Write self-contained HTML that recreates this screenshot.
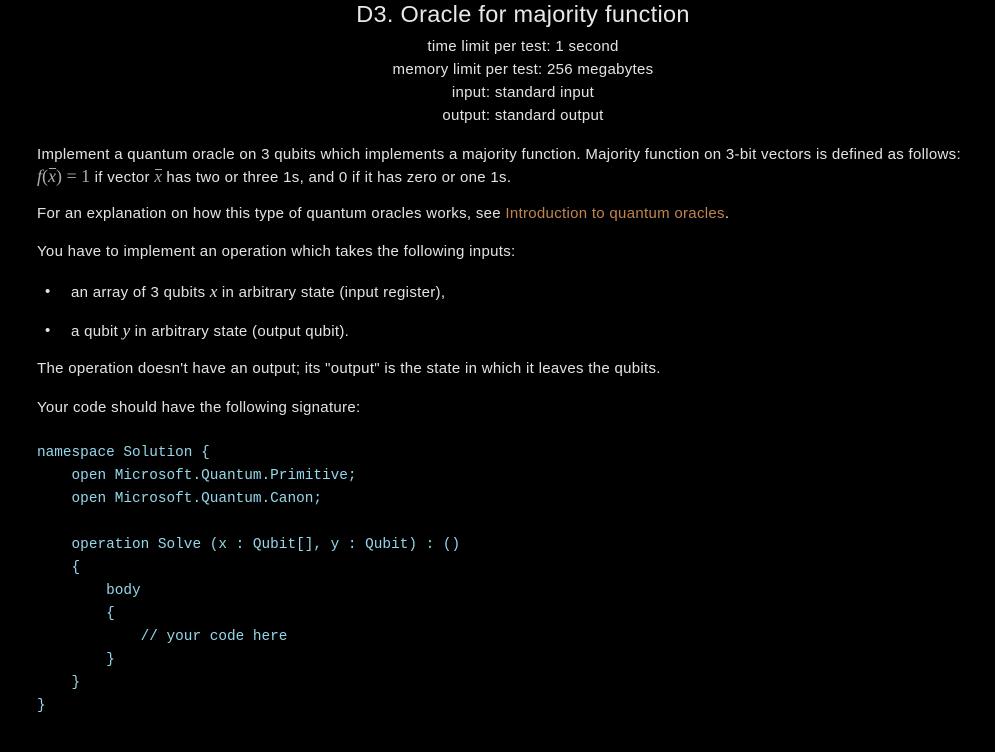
<!DOCTYPE html>
<html><head><meta charset="utf-8">
<style>
body{margin:0;background:#000;width:995px;height:752px;overflow:hidden;position:relative;font-family:"Liberation Sans",Arial,sans-serif;color:#e2e2e2;font-size:15px;letter-spacing:0.3px}
.a{position:absolute;white-space:nowrap;line-height:18px;margin-top:1px}
.c{left:0;width:1046px;text-align:center}
.m{font-family:"Liberation Serif",serif;font-style:italic;font-size:17px;letter-spacing:0}
.v{position:relative;display:inline-block}
.v:after{content:"";position:absolute;left:1px;right:0;top:1px;height:1px;background:#aaa}
.code{position:absolute;left:37px;top:442px;font-family:"Liberation Mono",monospace;font-size:14.4px;letter-spacing:0;line-height:23px;color:#94d6ea;white-space:pre;margin:0}
a{color:#c0844c;text-decoration:none}
</style></head><body>
<div class="a c" style="top:0;font-size:23.5px;line-height:26px;color:#e8e8e8">D3. Oracle for majority function</div>
<div class="a c" style="top:37px">time limit per test: 1 second</div>
<div class="a c" style="top:60px">memory limit per test: 256 megabytes</div>
<div class="a c" style="top:83px">input: standard input</div>
<div class="a c" style="top:106px">output: standard output</div>
<div class="a" style="left:37px;top:145px">Implement a quantum oracle on 3 qubits which implements a majority function. Majority function on 3-bit vectors is defined as follows:</div>
<div class="a" style="left:37px;top:166px"><span style="font-family:'Liberation Serif',serif;font-size:18px;color:#aaa;letter-spacing:0"><i>f</i>(<i class="v">x</i>) = 1</span> if vector <span class="m v" style="color:#aaa">x</span> has two or three 1s, and 0 if it has zero or one 1s.</div>
<div class="a" style="left:37px;top:204px">For an explanation on how this type of quantum oracles works, see <a>Introduction to quantum oracles</a>.</div>
<div class="a" style="left:37px;top:242px">You have to implement an operation which takes the following inputs:</div>
<div class="a" style="left:45px;top:282px">•</div>
<div class="a" style="left:71px;top:282px">an array of 3 qubits <span class="m">x</span> in arbitrary state (input register),</div>
<div class="a" style="left:45px;top:321px">•</div>
<div class="a" style="left:71px;top:321px">a qubit <span class="m">y</span> in arbitrary state (output qubit).</div>
<div class="a" style="left:37px;top:359px">The operation doesn't have an output; its "output" is the state in which it leaves the qubits.</div>
<div class="a" style="left:37px;top:398px">Your code should have the following signature:</div>
<pre class="code">namespace Solution {
    open Microsoft.Quantum.Primitive;
    open Microsoft.Quantum.Canon;

    operation Solve (x : Qubit[], y : Qubit) : ()
    {
        body
        {
            // your code here
        }
    }
}</pre>
</body></html>
